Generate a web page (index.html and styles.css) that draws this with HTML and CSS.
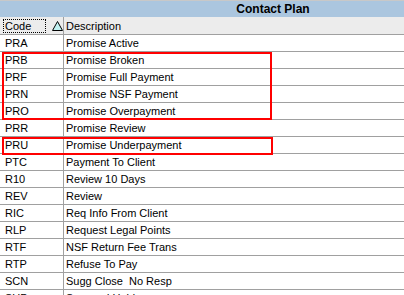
FILE: index.html
```html
<!DOCTYPE html>
<html>
<head>
<meta charset="utf-8">
<link rel="stylesheet" href="styles.css">
</head>
<body>
<div class="panel">
  <div class="title">Contact Plan</div>
  <div class="grid">
    <div class="hcell hcode"><span class="focus">Code</span><svg class="sort" width="11" height="10" viewBox="0 0 11 10"><polygon points="5.5,0.5 10.5,9.5 0.5,9.5" fill="#c0f2f2" stroke="#000" stroke-width="1"/></svg></div>
    <div class="hcell hdesc">Description</div>

    <div class="c">PRA</div><div class="d">Promise Active</div>
    <div class="c">PRB</div><div class="d">Promise Broken</div>
    <div class="c">PRF</div><div class="d">Promise Full Payment</div>
    <div class="c">PRN</div><div class="d">Promise NSF Payment</div>
    <div class="c">PRO</div><div class="d">Promise Overpayment</div>
    <div class="c">PRR</div><div class="d">Promise Review</div>
    <div class="c">PRU</div><div class="d">Promise Underpayment</div>
    <div class="c">PTC</div><div class="d">Payment To Client</div>
    <div class="c">R10</div><div class="d">Review 10 Days</div>
    <div class="c">REV</div><div class="d">Review</div>
    <div class="c">RIC</div><div class="d">Req Info From Client</div>
    <div class="c">RLP</div><div class="d">Request Legal Points</div>
    <div class="c">RTF</div><div class="d">NSF Return Fee Trans</div>
    <div class="c">RTP</div><div class="d">Refuse To Pay</div>
    <div class="c">SCN</div><div class="d">Sugg Close&nbsp; No Resp</div>
    <div class="c">SUP</div><div class="d">Suspend Hold</div>

    <div class="mark mark-a"></div>
    <div class="mark mark-b"></div>
  </div>
</div>
</body>
</html>
```
FILE: styles.css
```css
html, body {
  margin: 0;
  padding: 0;
  background: #ffffff;
  overflow: hidden;
}
body {
  width: 404px;
  height: 295px;
  font-family: "Liberation Sans", Arial, sans-serif;
  font-size: 11px;
  color: #000;
}
.panel {
  width: 404px;
}
.title {
  height: 16px;
  border-top: 1px solid #c8c8c8;
  background: #abc6df;
  font-weight: bold;
  font-size: 12px;
  line-height: 16px;
  text-align: center;
  padding-left: 142px;
}
.grid {
  position: relative;
  display: grid;
  grid-template-columns: 64px 1fr;
  grid-template-rows: 18px;
  grid-auto-rows: 17px;
}
.hcell {
  background: #ececec;
  border-bottom: 1px solid #a0a0a0;
  display: flex;
  align-items: center;
  height: 18px;
  box-sizing: border-box;
}
.hcode {
  border-right: 1px solid #a0a0a0;
  padding-left: 3px;
  gap: 6px;
}
.focus {
  display: inline-block;
  width: 40px;
  height: 12px;
  line-height: 12px;
  border: 1px dotted #000;
  padding-left: 1px;
}
.sort {
  display: block;
  margin-top: 1px;
}
.hdesc {
  padding-left: 2px;
}
.c, .d {
  border-bottom: 1px solid #a0a0a0;
  line-height: 16px;
  height: 16px;
  white-space: nowrap;
  overflow: hidden;
}
.c {
  border-right: 1px solid #a0a0a0;
  padding-left: 5px;
}
.d {
  padding-left: 2px;
}
.mark {
  position: absolute;
  border: 2px solid #ff0000;
  left: 2px;
  width: 266px;
  pointer-events: none;
}
.mark-a {
  top: 35px;
  height: 64px;
}
.mark-b {
  top: 120px;
  height: 14px;
  width: 267px;
}
```
